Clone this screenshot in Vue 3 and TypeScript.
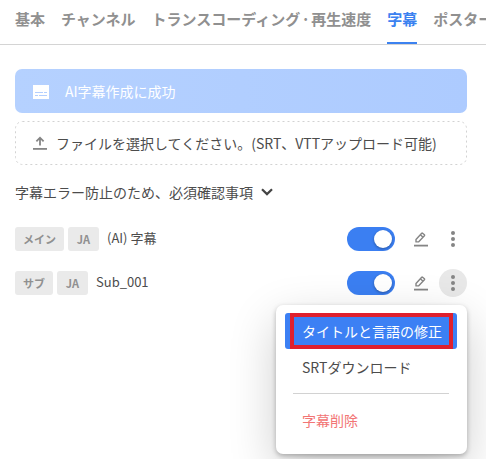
<script setup lang="ts">
import { ref } from 'vue'

interface Subtitle {
  kind: string
  lang: string
  title: string
  enabled: boolean
}

const activeTab = ref(3)
const tabs: string[][] = [['基本'], ['チャンネル'], ['トランスコーディング', '再生速度'], ['字幕'], ['ポスター']]

const subtitles = ref<Subtitle[]>([
  { kind: 'メイン', lang: 'JA', title: '(AI) 字幕', enabled: true },
  { kind: 'サブ', lang: 'JA', title: 'Sub_001', enabled: true },
])
const openRow = ref(1)
</script>

<template>
  <div class="page">
    <nav class="tabs">
      <a v-for="(parts, t) in tabs" :key="t" class="tab" :class="{ active: t === activeTab }" @click="activeTab = t"><template v-for="(part, p) in parts" :key="part"><span v-if="p > 0" class="dot">·</span>{{ part }}</template></a>
    </nav>

    <main class="content">
      <div class="banner">
        <svg class="caption-icon" width="16" height="14" viewBox="0 0 16 14">
          <path fill="#fff" d="M0 0h16v14H0z" />
          <path stroke="#b3cfff" stroke-width="1" d="M2 7.5h8M11 7.5h3M2 10.5h3M6 10.5h8" />
        </svg>
        <span>AI字幕作成に成功</span>
      </div>

      <div class="upload">
        <svg class="dash" width="452" height="44" viewBox="0 0 452 44">
          <rect x=".5" y=".5" width="451" height="43" rx="7" fill="none" stroke="#d2d2d2" stroke-dasharray="2 3" />
        </svg>
        <svg width="14" height="14" viewBox="0 0 14 14" fill="none" stroke="#858585">
          <path stroke-width="1.8" d="M7 9.6V2M3.4 5.3 7 1.7l3.6 3.6" />
          <path stroke-width="1.8" d="M0 12.9h14" />
        </svg>
        <span>ファイルを選択してください。(SRT、VTTアップロード可能)</span>
      </div>

      <div class="notice">
        <span>字幕エラー防止のため、必須確認事項</span>
        <svg width="12" height="8" viewBox="0 0 12 8" fill="none" stroke="#444" stroke-width="2.2">
          <path d="m1 1.2 5 4.9 5-4.9" />
        </svg>
      </div>

      <div class="rows">
        <div v-for="(item, i) in subtitles" :key="item.title" class="row">
          <span class="tag">{{ item.kind }}</span>
          <span class="tag">{{ item.lang }}</span>
          <span class="title">{{ item.title }}</span>
          <button class="switch" :class="{ on: item.enabled }" @click="item.enabled = !item.enabled"><i /></button>
          <svg class="edit" width="14" height="15" viewBox="0 0 14 15" fill="none" stroke="#858585">
            <path stroke-width="1.4" stroke-linejoin="round" d="M2 9.9V7.5L7.7 1.2q.4-.4.9 0L10.4 2.8q.4.4 0 .9L4.5 9.9zM6.4 2.8l2.4 2.3" />
            <path stroke-width="1.8" d="M0 13.6h14" />
          </svg>
          <button class="more" :class="{ open: i === openRow }" @click="openRow = i">
            <svg width="4" height="16" viewBox="0 0 4 16" fill="#858585">
              <circle cx="2" cy="2" r="2" /><circle cx="2" cy="8" r="2" /><circle cx="2" cy="14" r="2" />
            </svg>
          </button>
          <div v-if="i === openRow" class="menu">
            <div class="item selected">タイトルと言語の修正</div>
            <div class="item">SRTダウンロード</div>
            <hr>
            <div class="item danger">字幕削除</div>
          </div>
        </div>
      </div>
    </main>
  </div>
</template>

<style>
body {
  background: #fff;
  overflow: hidden;
}
</style>

<style scoped>
.page {
  box-sizing: border-box;
  width: 100%;
  height: 459px;
  overflow: hidden;
  font: 14px/20px "Noto Sans CJK JP", sans-serif;
  color: #4c4c4c;
}
.tabs {
  box-sizing: border-box;
  display: flex;
  gap: 16px;
  height: 45px;
  padding-left: 15px;
  border-bottom: 1px solid #d4d4d4;
  font-size: 15px;
  font-weight: 700;
  line-height: 38px;
  color: #909090;
  white-space: nowrap;
}
.tab {
  flex: none;
  box-sizing: border-box;
  height: 44px;
}
.tab.active {
  color: #3c82f0;
  border-bottom: 2px solid #3c82f0;
}
.dot {
  padding: 0 1px;
}
.content {
  padding: 24px 19px 0 15px;
}
.banner,
.upload {
  box-sizing: border-box;
  display: flex;
  align-items: center;
  height: 44px;
  border-radius: 7px;
}
.banner {
  gap: 16px;
  padding-left: 18px;
  background: linear-gradient(90deg, #b5d1ff, #adcbff);
  color: #fff;
}
.caption-icon {
  margin-top: 2px;
}
.upload {
  position: relative;
  gap: 9px;
  margin-top: 8px;
  padding-left: 18px;
}
.dash {
  position: absolute;
  inset: 0;
}
.notice {
  display: flex;
  align-items: center;
  gap: 8px;
  margin-top: 17px;
}
.rows {
  display: grid;
  gap: 20px;
  margin-top: 25px;
}
.row {
  position: relative;
  display: flex;
  align-items: center;
  height: 24px;
}
.tag {
  box-sizing: border-box;
  height: 24px;
  min-width: 31px;
  margin-right: 4px;
  padding: 0 8px;
  border-radius: 3px;
  background: #eaeaea;
  color: #909090;
  font-size: 11px;
  font-weight: 700;
  line-height: 25px;
  text-align: center;
}
.title {
  flex: 1;
  margin: -2px 0 0 4px;
  font-size: 13px;
}
button {
  border: 0;
  padding: 0;
}
.switch {
  display: flex;
  align-items: center;
  box-sizing: border-box;
  width: 48px;
  height: 24px;
  padding: 0 3px;
  border-radius: 12px;
  background: #ccc;
}
.switch.on {
  justify-content: flex-end;
  background: #3b7ff2;
}
.switch i {
  width: 18px;
  height: 18px;
  border-radius: 50%;
  background: #fff;
  box-shadow: 0 1px 3px #0005;
}
.edit {
  margin: 0 11px 0 19px;
}
.more {
  display: grid;
  place-items: center;
  width: 28px;
  height: 28px;
  border-radius: 50%;
  background: transparent;
}
.more.open {
  background: #e8e8e8;
}
.menu {
  position: absolute;
  top: 34px;
  right: 0;
  box-sizing: border-box;
  width: 191px;
  height: 149px;
  padding: 8px 10px 0 9px;
  border-radius: 7px;
  background: #fff;
  box-shadow: 0 2px 5px #0004, 0 16px 48px #0003;
}
.item {
  position: relative;
  height: 36px;
  padding-left: 17px;
  line-height: 36px;
}
.selected {
  border-radius: 3px;
  background: #3c80f4;
  color: #fff;
}
.selected::after {
  content: "";
  position: absolute;
  inset: 0 4px 0 5px;
  border: 4px solid #df202d;
}
hr {
  height: 1px;
  margin: 8px 8px;
  border: 0;
  background: #d2d2d2;
}
.danger {
  color: #f27575;
}
</style>
